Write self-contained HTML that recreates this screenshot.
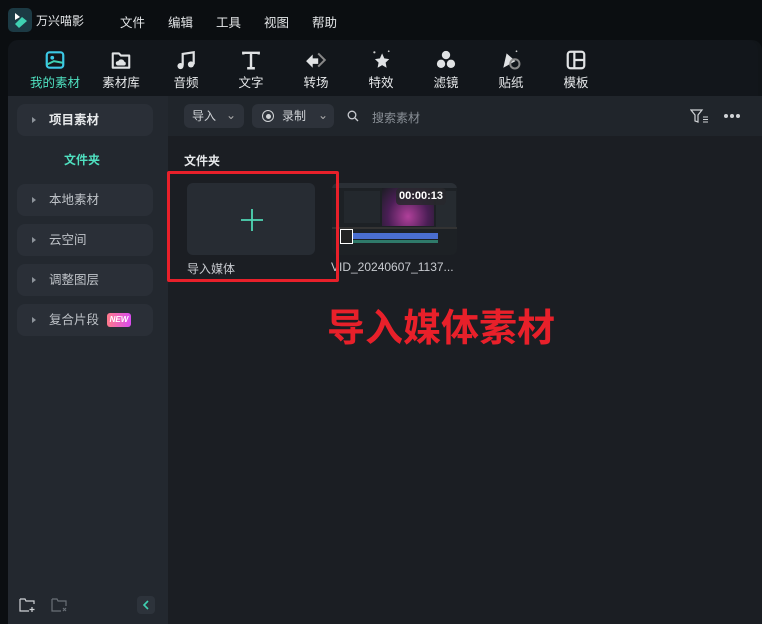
<!DOCTYPE html>
<html><head><meta charset="utf-8"><style>
*{margin:0;padding:0;box-sizing:border-box}
body{width:762px;height:624px;background:#0b0e11;font-family:"Liberation Sans","Noto Sans CJK SC",sans-serif;color:#d6d9dd;position:relative;overflow:hidden;font-size:12px}
.a{position:absolute}
.menu span{position:absolute;top:12px;font-size:12.5px;color:#e4e6e8}
.panel{left:8px;top:40px;width:754px;height:584px;background:#111519;border-radius:10px 10px 0 0}
.tb{left:8px;top:40px;width:750px;height:56px;background:#12161b;border-radius:10px 10px 0 0}
.tab{position:absolute;top:49px;width:60px;text-align:center;font-size:12.5px;color:#e6e8ea}
.tab svg{display:block;margin:0 auto 1px;width:22px;height:22px}
.side{left:8px;top:96px;width:160px;height:528px;background:#23282f}
.item{position:absolute;left:17px;width:136px;height:32px;background:#2a2f37;border-radius:8px;font-size:12.5px;color:#bfc3c8;line-height:32px;padding-left:32px}
.item:before{content:"";position:absolute;left:15px;top:13px;border-left:4px solid #8d939a;border-top:3px solid transparent;border-bottom:3px solid transparent}
.content{left:168px;top:96px;width:594px;height:528px;background:#1b1e23}
.strip{left:168px;top:96px;width:594px;height:40px;background:#20252b}
.btn{position:absolute;top:104px;height:24px;background:#2d323a;border-radius:6px;font-size:12px;color:#cfd2d6;line-height:24px}
</style></head><body>
<div class="a" style="left:8px;top:8px;width:24px;height:24px;background:#1c3a44;border-radius:5px"></div>
<svg class="a" style="left:11px;top:11px" width="18" height="18"><path d="M4 2 L9 6 L4 9Z" fill="#fff"/><path d="M11 6 L16 10 L8 17 L4 13Z" fill="#3fd1b2"/></svg>
<div class="menu"><span style="left:36px;font-size:12px">万兴喵影</span><span style="left:120px">文件</span><span style="left:168px">编辑</span><span style="left:216px">工具</span><span style="left:264px">视图</span><span style="left:312px">帮助</span></div>
<div class="a panel"></div>
<div class="a tb"></div>
<div class="tab" style="left:25px;color:#4fe0c0"><svg viewBox="0 0 20 20"><rect x="2.5" y="3" width="15" height="14" rx="2.5" fill="none" stroke="#3cc9e6" stroke-width="2"/><circle cx="7.5" cy="8" r="1.7" fill="#3cc9e6"/><path d="M3 14 L9 11 L17 12.5" stroke="#3fd1b2" stroke-width="1.8" fill="none"/></svg>我的素材</div>
<div class="tab" style="left:91px"><svg viewBox="0 0 20 20"><path d="M2.5 4h5.5l2 2h7.5v11h-15z" fill="none" stroke="#e0e2e4" stroke-width="1.9" stroke-linejoin="round"/><path d="M7 15a2 2 0 0 1 .5-4a3 3 0 0 1 5.5 .5a1.8 1.8 0 0 1 0 3.5z" fill="#e0e2e4"/></svg>素材库</div>
<div class="tab" style="left:156px"><svg viewBox="0 0 20 20"><path d="M7 15V4.5l10-1.5v11" fill="none" stroke="#e0e2e4" stroke-width="2"/><circle cx="5" cy="15.5" r="2.8" fill="#e0e2e4"/><circle cx="14.5" cy="14" r="2.8" fill="#e0e2e4"/></svg>音频</div>
<div class="tab" style="left:221px"><svg viewBox="0 0 20 20"><path d="M3 5V3.5h14V5M10 3.5v14M6.5 17.5h7" stroke="#e0e2e4" stroke-width="2.2" fill="none"/></svg>文字</div>
<div class="tab" style="left:286px"><svg viewBox="0 0 20 20"><path d="M1 11l6-6v3.5h5v5H7V17z" fill="#e0e2e4"/><path d="M12 4l6 6-6 6" stroke="#888" stroke-width="1.8" fill="none"/></svg>转场</div>
<div class="tab" style="left:351px"><svg viewBox="0 0 20 20"><path d="M11 4l2 4.5 4.5.7-3.3 3.2.9 4.6-4.1-2.3-4.1 2.3.9-4.6-3.3-3.2 4.5-.7z" fill="#e0e2e4"/><circle cx="4" cy="3" r="1" fill="#ccc"/><circle cx="17" cy="2" r=".8" fill="#ccc"/></svg>特效</div>
<div class="tab" style="left:416px"><svg viewBox="0 0 20 20"><circle cx="10" cy="5.5" r="3.8" fill="#e0e2e4"/><circle cx="5.5" cy="13.5" r="3.8" fill="#e0e2e4"/><circle cx="14.5" cy="13.5" r="3.8" fill="#e0e2e4"/></svg>滤镜</div>
<div class="tab" style="left:481px"><svg viewBox="0 0 20 20"><path d="M3 17L6 4l8 7z" fill="#e0e2e4"/><circle cx="13.5" cy="13.5" r="4.2" fill="none" stroke="#888" stroke-width="1.8"/><circle cx="15" cy="2" r=".8" fill="#ccc"/></svg>贴纸</div>
<div class="tab" style="left:546px"><svg viewBox="0 0 20 20"><rect x="2.5" y="2.5" width="15" height="15" rx="2.5" fill="none" stroke="#e0e2e4" stroke-width="2"/><path d="M8.5 2.5v15M8.5 10h9" stroke="#e0e2e4" stroke-width="2"/></svg>模板</div>
<div class="a side"></div>
<div class="item" style="top:104px;color:#e6e8ea;font-weight:bold">项目素材</div>
<div class="a" style="left:64px;top:151px;font-size:12px;color:#4fe0c0;font-weight:bold">文件夹</div>
<div class="item" style="top:184px">本地素材</div>
<div class="item" style="top:224px">云空间</div>
<div class="item" style="top:264px">调整图层</div>
<div class="item" style="top:304px">复合片段<span style="position:absolute;left:90px;top:9px;width:24px;height:14px;line-height:14px;border-radius:3px;background:linear-gradient(90deg,#ff7a8a,#d94bf0);font-size:8px;font-style:italic;font-weight:bold;color:#fff;text-align:center">NEW</span></div>
<svg class="a" style="left:19px;top:597px" width="18" height="16"><path d="M1 2h5l1 2h8v3M1 2v12h9" fill="none" stroke="#d0d3d6" stroke-width="1.2"/><path d="M13 10v5M10.5 12.5h5" stroke="#d0d3d6" stroke-width="1.2"/></svg>
<svg class="a" style="left:51px;top:597px" width="18" height="16"><path d="M1 2h5l1 2h8v5M1 2v12h9" fill="none" stroke="#6a7077" stroke-width="1.2"/><path d="M12 11l3 3M15 11l-3 3" stroke="#6a7077" stroke-width="1.2"/></svg>
<div class="a" style="left:137px;top:596px;width:18px;height:18px;background:#2d333b;border-radius:4px"></div>
<svg class="a" style="left:142px;top:600px" width="8" height="10"><path d="M6 1L2 5l4 4" stroke="#3fd1b2" stroke-width="1.6" fill="none"/></svg>
<div class="a content"></div>
<div class="a strip"></div>
<div class="btn" style="left:184px;width:60px;padding-left:8px">导入<span style="position:absolute;right:8px;top:-1px;color:#aaa">⌄</span></div>
<div class="btn" style="left:252px;width:82px;padding-left:30px">录制<span style="position:absolute;left:10px;top:6px;width:12px;height:12px;border:1.5px solid #d0d3d6;border-radius:50%"></span><span style="position:absolute;left:13.5px;top:9.5px;width:5px;height:5px;background:#d0d3d6;border-radius:50%"></span><span style="position:absolute;right:6px;top:-1px;color:#aaa">⌄</span></div>
<svg class="a" style="left:347px;top:110px" width="12" height="12"><circle cx="5" cy="5" r="3.8" fill="none" stroke="#c8cbd0" stroke-width="1.3"/><path d="M8 8l3 3" stroke="#c8cbd0" stroke-width="1.3"/></svg>
<div class="a" style="left:372px;top:109px;font-size:12px;color:#8a9097">搜索素材</div>
<svg class="a" style="left:690px;top:108px" width="22" height="16"><path d="M1 2h11l-4 5v7l-3-1V7z" fill="none" stroke="#d0d3d6" stroke-width="1.2"/><path d="M13 9h5M13 11.5h5M13 14h5" stroke="#d0d3d6" stroke-width="1"/></svg>
<div class="a" style="left:724px;top:114px;width:4px;height:4px;background:#d0d3d6;border-radius:2px;box-shadow:6px 0 #d0d3d6,12px 0 #d0d3d6"></div>
<div class="a" style="left:184px;top:152px;font-size:12px;font-weight:bold;color:#e6e8ea">文件夹</div>
<div class="a" style="left:187px;top:183px;width:128px;height:72px;background:#272c33;border-radius:6px"></div>
<svg class="a" style="left:240px;top:208px" width="24" height="24"><path d="M12 1v22M1 12h22" stroke="#4fd6b4" stroke-width="1.8"/></svg>
<div class="a" style="left:187px;top:260px;font-size:12px;color:#c8cbd0">导入媒体</div>
<div class="a" style="left:332px;top:183px;width:125px;height:72px;border-radius:6px;background:#1d2125;overflow:hidden">
<div style="position:absolute;left:0;top:0;width:125px;height:5px;background:#2a2f35"></div>
<div style="position:absolute;left:50px;top:5px;width:52px;height:38px;background:radial-gradient(ellipse at 50% 75%,#b0409a,#4a1e55 55%,#1a1d22)"></div>
<div style="position:absolute;left:12px;top:8px;width:36px;height:32px;background:#23282d"></div>
<div style="position:absolute;left:104px;top:8px;width:20px;height:36px;background:#262b30"></div>
<div style="position:absolute;left:0;top:44px;width:125px;height:2px;background:#333"></div>
<div style="position:absolute;left:14px;top:50px;width:92px;height:6px;background:#4a6ed0"></div>
<div style="position:absolute;left:14px;top:57px;width:92px;height:3px;background:#2f7a6a"></div>
</div>
<div class="a" style="left:396px;top:188px;width:50px;height:17px;background:rgba(40,40,45,.85);border-radius:4px;font-size:11px;font-weight:bold;color:#fff;text-align:center;line-height:17px">00:00:13</div>
<div class="a" style="left:340px;top:229px;width:13px;height:15px;border:1px solid #fff;background:#222"></div>
<div class="a" style="left:331px;top:260px;font-size:12px;color:#c8cbd0">VID_20240607_1137...</div>
<div class="a" style="left:167px;top:171px;width:172px;height:111px;border:3px solid #e8202a;border-radius:2px"></div>
<div class="a" style="left:327px;top:304px;font-size:38px;line-height:50px;font-weight:bold;color:#e8202a;white-space:nowrap">导入媒体素材</div>
</body></html>
